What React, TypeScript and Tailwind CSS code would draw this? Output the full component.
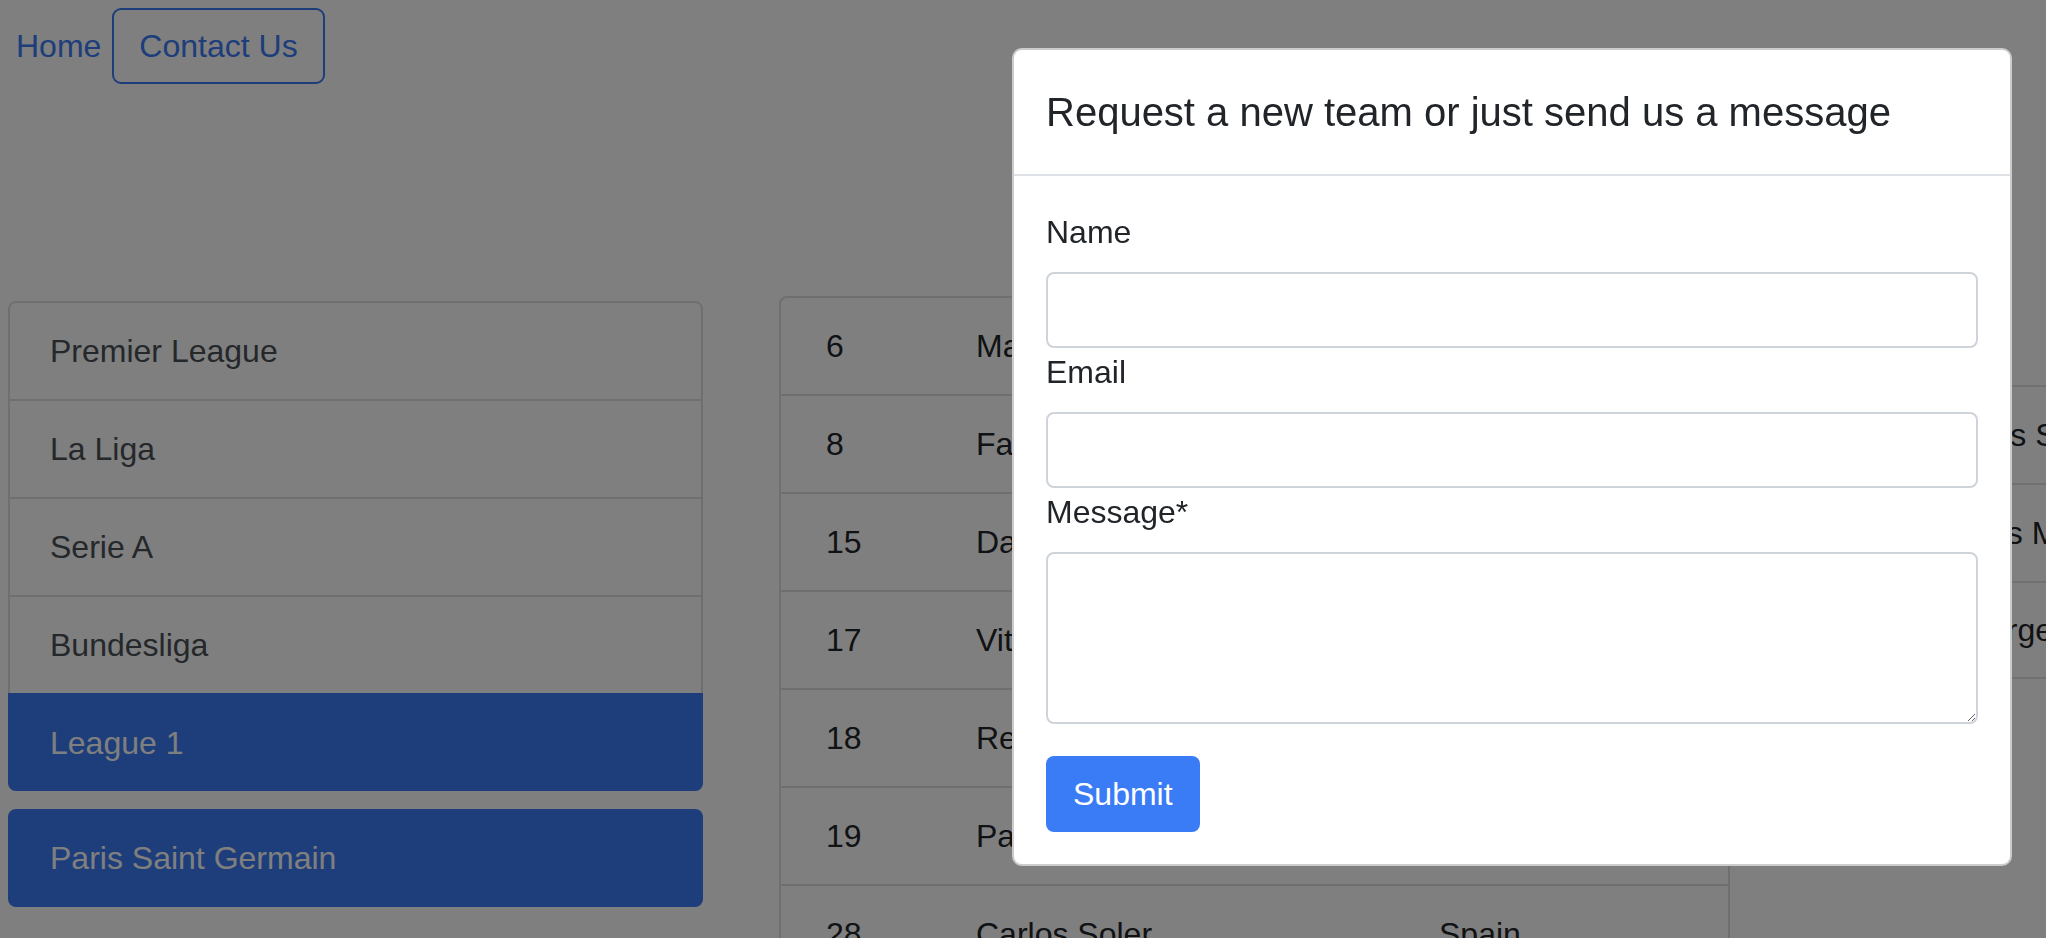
import { useState } from "react";

type Player = {
  number: number;
  name: string;
  country: string;
};

const leagues = ["Premier League", "La Liga", "Serie A", "Bundesliga", "League 1"];

const players: Player[] = [
  { number: 6, name: "Marco Verratti", country: "Italy" },
  { number: 8, name: "Fabián Ruiz", country: "Spain" },
  { number: 15, name: "Danilo Pereira", country: "Portugal" },
  { number: 17, name: "Vitinha", country: "Portugal" },
  { number: 18, name: "Renato Sanches", country: "Portugal" },
  { number: 19, name: "Pablo Sarabia", country: "Spain" },
  { number: 28, name: "Carlos Soler", country: "Spain" },
  { number: 30, name: "Lionel Messi", country: "Argentina" },
];

const sideRows = ["Nils Sanchez", "Jos Mendes", "Jorge Costa"];

export default function App() {
  const [activeLeague, setActiveLeague] = useState("League 1");
  const [showModal] = useState(true);

  return (
    <div className="relative h-screen w-screen overflow-hidden bg-white font-['Liberation_Sans',Arial,sans-serif] text-[32px] leading-[48px] text-[#212529]">
      <nav className="flex items-center pt-2 pl-4">
        <a href="#" className="text-[#3a7bf6]">
          Home
        </a>
        <button className="ml-[11px] h-[76px] rounded-[9px] border-2 border-[#3a7bf6] px-[25px] text-[#3a7bf6]">
          Contact Us
        </button>
      </nav>

      <div className="mt-[212px] flex items-start">
        <div className="ml-2 mt-[5px] w-[695px] shrink-0">
          <div className="flex flex-col rounded-lg border-2 border-black/[0.125]">
            {leagues.map((league, i) => (
              <button
                key={league}
                onClick={() => setActiveLeague(league)}
                className={`px-10 text-left ${
                  i > 0 ? "h-[98px] border-t-2" : "h-[96px]"
                } ${
                  activeLeague === league
                    ? "-mx-[2px] -mb-[2px] rounded-b-lg border-[#3a7bf6] bg-[#3a7bf6] pl-[42px] text-white"
                    : "border-black/[0.125] text-[#495057]"
                }`}
              >
                {league}
              </button>
            ))}
          </div>
          <div className="mt-[18px] flex h-[98px] items-center rounded-lg bg-[#3a7bf6] px-[42px] text-white">
            Paris Saint Germain
          </div>
        </div>

        <div className="ml-[76px] w-[951px] shrink-0 rounded-t-lg border-x-2 border-t-2 border-black/[0.125]">
          {players.map((p, i) => (
            <div
              key={p.number}
              className={`grid grid-cols-[150px_463px_1fr] items-center pl-[45px] ${
                i > 0 ? "h-[98px] border-t-2 border-black/[0.125]" : "h-[96px]"
              }`}
            >
              <span>{p.number}</span>
              <span>{p.name}</span>
              <span>{p.country}</span>
            </div>
          ))}
        </div>

        <div className="ml-10 mt-[89px] w-[600px] shrink-0">
          {sideRows.map((row, i) => (
            <div
              key={row}
              className={`flex h-[98px] items-center border-t-2 border-[#dee2e6] pl-[203px] ${
                i === sideRows.length - 1 ? "border-b-2" : ""
              }`}
            >
              {row}
            </div>
          ))}
        </div>
      </div>

      {showModal && (
        <>
          <div className="fixed inset-0 bg-black/50" />
          <div className="fixed left-[1012px] top-[48px] w-[1000px] rounded-[10px] border-2 border-black/20 bg-white">
            <div className="border-b-2 border-[#dee2e6] p-8">
              <h5 className="text-[40px] font-medium leading-[60px] text-[#212529]">
                Request a new team or just send us a message
              </h5>
            </div>
            <form className="flex flex-col p-8" onSubmit={(e) => e.preventDefault()}>
              <label className="mb-4">Name</label>
              <input className="h-[76px] rounded-lg border-2 border-[#ced4da] px-6 outline-none" />
              <label className="mb-4">Email</label>
              <input className="h-[76px] rounded-lg border-2 border-[#ced4da] px-6 outline-none" />
              <label className="mb-4">Message*</label>
              <textarea
                rows={3}
                className="h-[172px] rounded-lg border-2 border-[#ced4da] px-6 py-3 outline-none"
              />
              <div className="mt-8">
                <button
                  type="submit"
                  className="h-[76px] rounded-lg bg-[#3a7bf6] px-[27px] text-white"
                >
                  Submit
                </button>
              </div>
            </form>
          </div>
        </>
      )}
    </div>
  );
}
